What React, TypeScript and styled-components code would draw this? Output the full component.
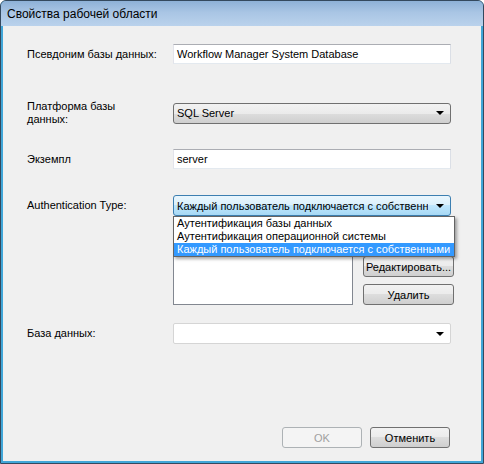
import React from "react";
import styled, { createGlobalStyle } from "styled-components";

const GlobalStyle = createGlobalStyle`
  html, body {
    margin: 0;
    padding: 0;
    background: #ffffff;
  }
  body {
    font-family: "Liberation Sans", Arial, sans-serif;
    font-size: 11px;
    color: #000000;
  }
`;

const Window = styled.div`
  width: 484px;
  height: 464px;
  box-sizing: border-box;
  display: flex;
  flex-direction: column;
  border: 1px solid #34495e;
  border-radius: 6px 6px 0 0;
  background: #41a6d8;
  overflow: hidden;
`;

const TitleBar = styled.div`
  height: 25px;
  flex: none;
  display: flex;
  align-items: center;
  padding-left: 6px;
  background: linear-gradient(180deg, #8eb1d7 0%, #a9c5e4 45%, #bad2ec 100%);
  font-size: 12px;
  color: #000000;
`;

const Client = styled.div`
  flex: 1;
  display: flex;
  flex-direction: column;
  margin: 0 2px 2px 2px;
  padding-left: 24px;
  background: #f0f0f0;
`;

const Row = styled.div<{ $gap: number }>`
  display: grid;
  grid-template-columns: 146px auto;
  align-items: center;
  margin-top: ${(p) => p.$gap}px;
`;

const Label = styled.div`
  line-height: 13px;
  white-space: nowrap;
`;

const TextBox = styled.div`
  width: 278px;
  height: 20px;
  box-sizing: border-box;
  padding: 0 3px;
  line-height: 18px;
  background: #ffffff;
  border: 1px solid;
  border-color: #abadb3 #dbdfe6 #e3e9ef #e2e3ea;
  white-space: nowrap;
  overflow: hidden;
`;

const Combo = styled.div<{ $kind: "button" | "active" | "edit" }>`
  width: 278px;
  height: 21px;
  box-sizing: border-box;
  display: flex;
  align-items: center;
  padding: 0 6px 0 3px;
  border: 1px solid
    ${(p) =>
      p.$kind === "active" ? "#3c7fb1" : p.$kind === "edit" ? "#d5d5d5" : "#707070"};
  border-radius: ${(p) => (p.$kind === "edit" ? "2px" : "3px")};
  background: ${(p) =>
    p.$kind === "active"
      ? "linear-gradient(180deg, #eaf6fd 0%, #d9f0fc 50%, #bee6fd 50%, #a7d9f5 100%)"
      : p.$kind === "edit"
      ? "#ffffff"
      : "linear-gradient(180deg, #f2f2f2 0%, #ebebeb 50%, #dddddd 50%, #cfcfcf 100%)"};
`;

const ComboText = styled.span`
  flex: 1;
  overflow: hidden;
  white-space: nowrap;
  text-overflow: clip;
  margin-right: 8px;
`;

const Arrow = styled.span`
  flex: none;
  width: 0;
  height: 0;
  border-left: 4px solid transparent;
  border-right: 4px solid transparent;
  border-top: 4px solid #000000;
`;

const DropHolder = styled.div`
  position: relative;
`;

const DropList = styled.div`
  position: absolute;
  top: 100%;
  left: 0;
  width: 282px;
  box-sizing: border-box;
  z-index: 2;
  background: #ffffff;
  border: 1px solid #646464;
  box-shadow: 2px 2px 3px rgba(0, 0, 0, 0.35);
`;

const DropItem = styled.div<{ $selected?: boolean }>`
  height: 13px;
  line-height: 13px;
  padding-left: 3px;
  white-space: nowrap;
  overflow: hidden;
  background: ${(p) => (p.$selected ? "#3399ff" : "transparent")};
  color: ${(p) => (p.$selected ? "#ffffff" : "#000000")};
`;

const ListArea = styled.div`
  display: flex;
  gap: 10px;
`;

const ListBox = styled.div`
  width: 180px;
  height: 77px;
  box-sizing: border-box;
  background: #ffffff;
  border: 1px solid #828790;
`;

const ButtonColumn = styled.div`
  display: flex;
  flex-direction: column;
  gap: 7px;
`;

const Button = styled.div<{ $width: number; $disabled?: boolean }>`
  width: ${(p) => p.$width}px;
  height: 21px;
  box-sizing: border-box;
  display: flex;
  align-items: center;
  justify-content: center;
  white-space: nowrap;
  border: 1px solid ${(p) => (p.$disabled ? "#adb2b5" : "#707070")};
  border-radius: 3px;
  color: ${(p) => (p.$disabled ? "#a0a0a0" : "#000000")};
  background: ${(p) =>
    p.$disabled
      ? "#f4f4f4"
      : "linear-gradient(180deg, #f2f2f2 0%, #ebebeb 50%, #dddddd 50%, #cfcfcf 100%)"};
`;

const Footer = styled.div`
  margin-top: auto;
  display: flex;
  justify-content: flex-end;
  gap: 8px;
  padding: 0 31px 13px 0;
`;

export default function App() {
  return (
    <>
      <GlobalStyle />
      <Window>
        <TitleBar>Свойства рабочей области</TitleBar>
        <Client>
          <Row $gap={18}>
            <Label>Псевдоним базы данных:</Label>
            <TextBox>Workflow Manager System Database</TextBox>
          </Row>
          <Row $gap={36}>
            <Label>
              Платформа базы
              <br />
              данных:
            </Label>
            <Combo $kind="button">
              <ComboText>SQL Server</ComboText>
              <Arrow />
            </Combo>
          </Row>
          <Row $gap={23}>
            <Label>Экземпл</Label>
            <TextBox>server</TextBox>
          </Row>
          <Row $gap={26}>
            <Label>Authentication Type:</Label>
            <DropHolder>
              <Combo $kind="active">
                <ComboText>Каждый пользователь подключается с собственными</ComboText>
                <Arrow />
              </Combo>
              <DropList>
                <DropItem>Аутентификация базы данных</DropItem>
                <DropItem>Аутентификация операционной системы</DropItem>
                <DropItem $selected>Каждый пользователь подключается с собственными</DropItem>
              </DropList>
            </DropHolder>
          </Row>
          <Row $gap={12}>
            <Label />
            <ListArea>
              <ListBox />
              <ButtonColumn>
                <Button $width={91}>Добавить...</Button>
                <Button $width={91}>Редактировать...</Button>
                <Button $width={91}>Удалить</Button>
              </ButtonColumn>
            </ListArea>
          </Row>
          <Row $gap={18}>
            <Label>База данных:</Label>
            <Combo $kind="edit">
              <ComboText />
              <Arrow />
            </Combo>
          </Row>
          <Footer>
            <Button $width={80} $disabled>
              OK
            </Button>
            <Button $width={80}>Отменить</Button>
          </Footer>
        </Client>
      </Window>
    </>
  );
}
